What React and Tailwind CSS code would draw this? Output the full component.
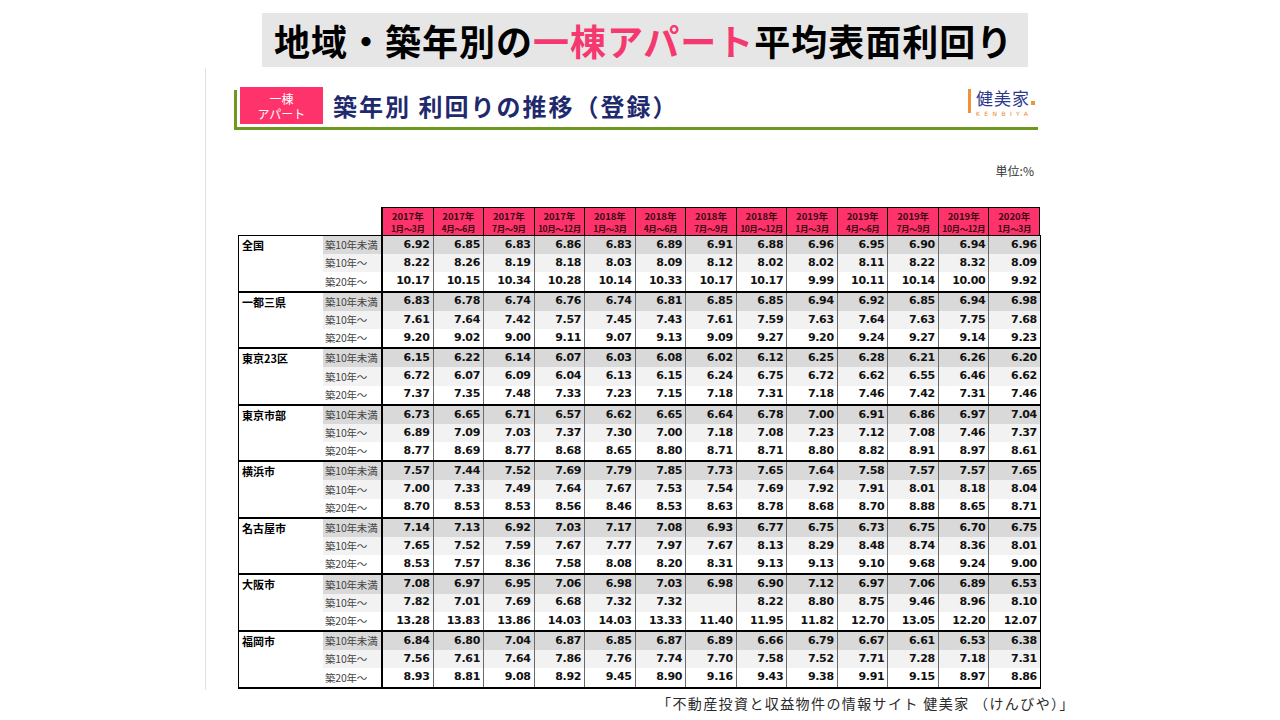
import React from "react";

const periods = [
  ["2017年", "1月～3月"],
  ["2017年", "4月～6月"],
  ["2017年", "7月～9月"],
  ["2017年", "10月～12月"],
  ["2018年", "1月～3月"],
  ["2018年", "4月～6月"],
  ["2018年", "7月～9月"],
  ["2018年", "10月～12月"],
  ["2019年", "1月～3月"],
  ["2019年", "4月～6月"],
  ["2019年", "7月～9月"],
  ["2019年", "10月～12月"],
  ["2020年", "1月～3月"],
];

const labels = ["築10年未満", "築10年～", "築20年～"];
const shades = ["bg-[#d9d9d9]", "bg-[#f2f2f2]", "bg-white"];

const groups = [
  {
    name: "全国",
    rows: [
      "6.92 6.85 6.83 6.86 6.83 6.89 6.91 6.88 6.96 6.95 6.90 6.94 6.96",
      "8.22 8.26 8.19 8.18 8.03 8.09 8.12 8.02 8.02 8.11 8.22 8.32 8.09",
      "10.17 10.15 10.34 10.28 10.14 10.33 10.17 10.17 9.99 10.11 10.14 10.00 9.92",
    ],
  },
  {
    name: "一都三県",
    rows: [
      "6.83 6.78 6.74 6.76 6.74 6.81 6.85 6.85 6.94 6.92 6.85 6.94 6.98",
      "7.61 7.64 7.42 7.57 7.45 7.43 7.61 7.59 7.63 7.64 7.63 7.75 7.68",
      "9.20 9.02 9.00 9.11 9.07 9.13 9.09 9.27 9.20 9.24 9.27 9.14 9.23",
    ],
  },
  {
    name: "東京23区",
    rows: [
      "6.15 6.22 6.14 6.07 6.03 6.08 6.02 6.12 6.25 6.28 6.21 6.26 6.20",
      "6.72 6.07 6.09 6.04 6.13 6.15 6.24 6.75 6.72 6.62 6.55 6.46 6.62",
      "7.37 7.35 7.48 7.33 7.23 7.15 7.18 7.31 7.18 7.46 7.42 7.31 7.46",
    ],
  },
  {
    name: "東京市部",
    rows: [
      "6.73 6.65 6.71 6.57 6.62 6.65 6.64 6.78 7.00 6.91 6.86 6.97 7.04",
      "6.89 7.09 7.03 7.37 7.30 7.00 7.18 7.08 7.23 7.12 7.08 7.46 7.37",
      "8.77 8.69 8.77 8.68 8.65 8.80 8.71 8.71 8.80 8.82 8.91 8.97 8.61",
    ],
  },
  {
    name: "横浜市",
    rows: [
      "7.57 7.44 7.52 7.69 7.79 7.85 7.73 7.65 7.64 7.58 7.57 7.57 7.65",
      "7.00 7.33 7.49 7.64 7.67 7.53 7.54 7.69 7.92 7.91 8.01 8.18 8.04",
      "8.70 8.53 8.53 8.56 8.46 8.53 8.63 8.78 8.68 8.70 8.88 8.65 8.71",
    ],
  },
  {
    name: "名古屋市",
    rows: [
      "7.14 7.13 6.92 7.03 7.17 7.08 6.93 6.77 6.75 6.73 6.75 6.70 6.75",
      "7.65 7.52 7.59 7.67 7.77 7.97 7.67 8.13 8.29 8.48 8.74 8.36 8.01",
      "8.53 7.57 8.36 7.58 8.08 8.20 8.31 9.13 9.13 9.10 9.68 9.24 9.00",
    ],
  },
  {
    name: "大阪市",
    rows: [
      "7.08 6.97 6.95 7.06 6.98 7.03 6.98 6.90 7.12 6.97 7.06 6.89 6.53",
      "7.82 7.01 7.69 6.68 7.32 7.32 - 8.22 8.80 8.75 9.46 8.96 8.10",
      "13.28 13.83 13.86 14.03 14.03 13.33 11.40 11.95 11.82 12.70 13.05 12.20 12.07",
    ],
  },
  {
    name: "福岡市",
    rows: [
      "6.84 6.80 7.04 6.87 6.85 6.87 6.89 6.66 6.79 6.67 6.61 6.53 6.38",
      "7.56 7.61 7.64 7.86 7.76 7.74 7.70 7.58 7.52 7.71 7.28 7.18 7.31",
      "8.93 8.81 9.08 8.92 9.45 8.90 9.16 9.43 9.38 9.91 9.15 8.97 8.86",
    ],
  },
];

function Logo() {
  return (
    <div className="ml-auto mr-[3px] -mt-[1px] flex self-start">
      <div className="w-[3px] h-[24px] bg-[#f0923a]"></div>
      <div className="ml-[5px] flex flex-col">
        <div className="flex items-end leading-none">
          <span className="text-[17px] text-[#2d3a8c] tracking-[1px]">健美家</span>
          <span className="w-[4px] h-[4px] bg-[#f0923a] ml-[1px] mb-[1px]"></span>
        </div>
        <span className="mt-[5px] text-[6px] leading-none tracking-[4.4px] text-[#e8842a] font-['DejaVu_Sans',sans-serif]">
          KENBIYA
        </span>
      </div>
    </div>
  );
}

function Group({ group }) {
  return (
    <div className="grid grid-cols-[84px_60px_repeat(13,minmax(0,1fr))] grid-rows-[repeat(3,18.2px)] border-b-2 border-black">
      <div className="row-span-3 pl-[3px] pt-[2px] text-[11px] leading-[14px] font-bold text-black">
        {group.name}
      </div>
      {group.rows.map((row, r) => (
        <React.Fragment key={r}>
          <div
            className={`${shades[r]} border-r-2 border-black pl-[2px] flex items-center whitespace-nowrap overflow-hidden text-[10.5px] tracking-[-0.2px] text-[#444]`}
          >
            {labels[r]}
          </div>
          {row.split(" ").map((v, c) => (
            <div
              key={c}
              className={`${shades[r]} ${
                c === 12 ? "" : "border-r border-[#6a6a6a]"
              } flex items-center justify-end pr-[3px] font-['DejaVu_Sans',sans-serif] font-bold text-[11px] tracking-[-0.3px] text-[#111]`}
            >
              {v === "-" ? "" : v}
            </div>
          ))}
        </React.Fragment>
      ))}
    </div>
  );
}

function App() {
  return (
    <div className="w-[1280px] h-[720px] bg-white overflow-hidden font-['Noto_Sans_CJK_JP',sans-serif]">
      <div className="ml-[262px] mt-[13px] w-[766px] h-[54px] bg-[#e6e6e6] pl-[12px] flex items-center">
        <h1 className="text-[36px] font-bold leading-none text-black tracking-[1px]">
          地域・築年別の<span className="text-[#f5386f]">一棟アパート</span>平均表面利回り
        </h1>
      </div>

      <div className="ml-[205px] mt-[1px] w-[850px] h-[622px] border-l border-[#e2e2e2] pt-[22px]">
        <div className="ml-[28px] w-[804px] h-[40px] border-l-[3px] border-b-[3px] border-[#6d9a1e] flex items-start">
          <div className="-mt-[3px] ml-[3px] w-[83px] h-[37px] bg-[#ff336b] flex flex-col items-center justify-center text-white text-[12px] leading-[15px]">
            <span>一棟</span>
            <span>アパート</span>
          </div>
          <div className="-mt-[3px] ml-[10px] h-[37px] flex items-center text-[24px] font-bold text-[#1f2a6e] tracking-[2px] whitespace-nowrap">
            築年別 利回りの推移（登録）
          </div>
          <Logo />
        </div>

        <div className="ml-[32px] w-[803px]">
          <div className="mt-[33px] h-[16px] pr-[7px] text-right text-[12px] leading-[16px] text-[#333]">
            単位:%
          </div>

          <div className="mt-[28px] grid grid-cols-[84px_60px_repeat(13,minmax(0,1fr))] h-[28px] pl-[1px] pr-[1px]">
            <div></div>
            <div className="border-r-2 border-black"></div>
            {periods.map((p, i) => (
              <div
                key={i}
                className={`bg-[#ff336b] border-t border-black ${
                  i === 12 ? "border-r border-black" : "border-r border-[#5a2030]"
                } flex flex-col items-center justify-center font-bold text-[#3a0a14] leading-[12px]`}
              >
                <span className="text-[9.5px]">{p[0]}</span>
                <span className="text-[8.5px] tracking-[-0.4px] whitespace-nowrap">{p[1]}</span>
              </div>
            ))}
          </div>

          <div className="border-t border-l border-r border-black">
            {groups.map((g) => (
              <Group key={g.name} group={g} />
            ))}
          </div>
        </div>
      </div>

      <div className="ml-[657px] mt-[3px] text-[14px] leading-[20px] text-[#2a2a2a] tracking-[1.4px] whitespace-nowrap">
        「不動産投資と収益物件の情報サイト 健美家 （けんびや）」
      </div>
    </div>
  );
}

export default App;
